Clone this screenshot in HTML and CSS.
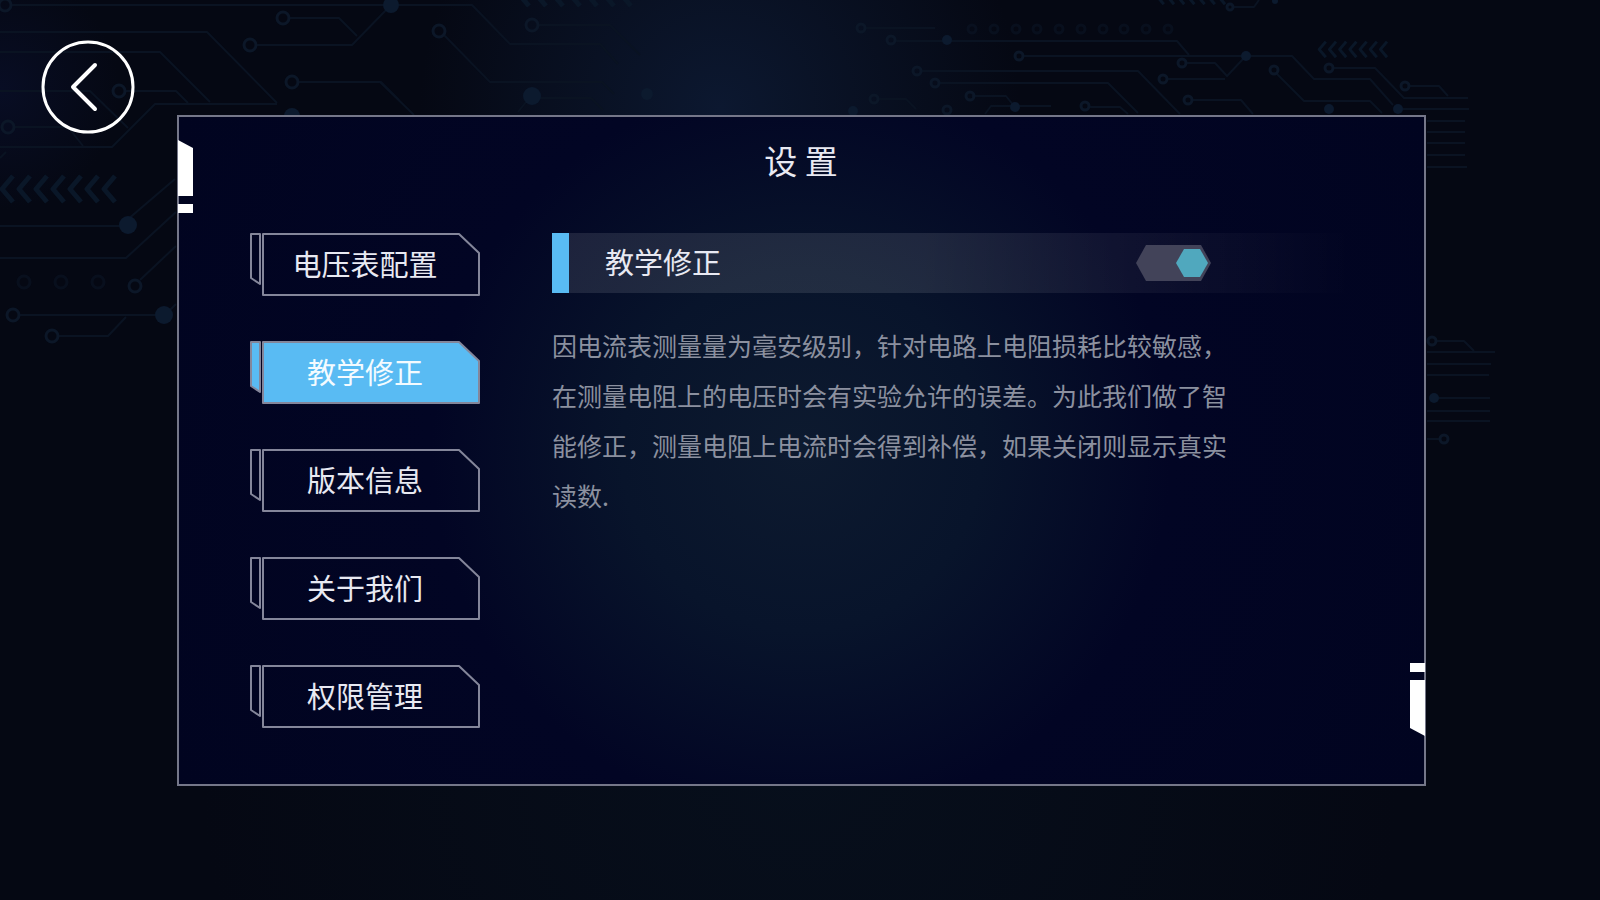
FILE: index.html
```html
<!DOCTYPE html>
<html lang="zh-CN">
  <head>
    <meta charset="utf-8">
    <title>设置</title>
    <link rel="stylesheet" href="styles.css">
  </head>
  <body>

    <!-- circuit board backdrop -->
    <svg class="circuit" viewBox="0 0 1600 900" preserveAspectRatio="xMidYMid slice" aria-hidden="true">
      <defs>
        <g id="arrows">
          <path d="M13 1L2 14l11 13M30 1L19 14l11 13M47 1L36 14l11 13M64 1L53 14l11 13M81 1L70 14l11 13M98 1L87 14l11 13M115 1l-11 13l11 13"/>
        </g>
      </defs>
      <g class="traces">
        <path d="M11 5H385M289 18h50l18 18M256 45h96L390 6M0 32h207l70 71M0 52h160l50 50M299 82h82l18 18M125 91h51l12 12M0 91h90l38 37M14 127h54l15 19M0 147h112l43-43h122M0 158l6-6"/>
        <path d="M0 226h120l55-47M0 258h126l50-46M140 280l36-34M19 315h142M58 336h50l18-19M165 315l11-11"/>
        <path d="M390 5h82l38 39h90l18 20M444 35l46 47h112l12 12M539 25h71l30 30M540 98h51l12 12M518 112l8-10M380 82l34 33"/>
        <path d="M865 28h70M895 41h282l12 14M1023 56h269l22 23h56l23 26M922 71h216l42 43M938 83h170l30 30M972 96h34l8 10M1090 107h30l8 7M1187 63h28l12 13l17-18M1166 79h59M1191 100h50l12 14M1276 73l28 28h66l12 12M1334 68h41l29 30h64M1409 86h30l9 10M878 99h28l10 10M985 114l6-8h60M1232 7h22l5-7"/>
        <path d="M1398 109h71M1427 121h38M1427 132h38M1427 143h38M1427 155h38M1427 167h40M1435 341h29l10 10M1427 352h68M1427 364h64M1427 375h62M1436 398h54M1427 411h63M1427 421h63M1427 439h14"/>
      </g>
      <g class="rings">
        <circle cx="5" cy="5" r="6"/><circle cx="283" cy="18" r="6"/><circle cx="250" cy="45" r="6"/>
        <circle cx="292" cy="82" r="6"/><circle cx="119" cy="91" r="6"/><circle cx="8" cy="127" r="6"/>
        <circle cx="135" cy="286" r="6"/><circle cx="13" cy="315" r="6"/><circle cx="52" cy="336" r="6"/>
        <circle cx="439" cy="31" r="6"/><circle cx="532" cy="25" r="6"/>
        <circle cx="861" cy="28" r="4"/><circle cx="891" cy="40" r="4"/><circle cx="1019" cy="56" r="4"/>
        <circle cx="917" cy="71" r="4"/><circle cx="935" cy="83" r="4"/><circle cx="970" cy="96" r="4"/>
        <circle cx="874" cy="99" r="4"/><circle cx="947" cy="110" r="4"/><circle cx="1085" cy="106" r="4"/>
        <circle cx="1182" cy="63" r="4"/><circle cx="1163" cy="79" r="4"/><circle cx="1188" cy="100" r="4"/>
        <circle cx="1274" cy="70" r="4"/><circle cx="1329" cy="68" r="4"/><circle cx="1405" cy="86" r="4"/>
        <circle cx="1432" cy="341" r="4"/><circle cx="1444" cy="439" r="4"/><circle cx="1230" cy="7" r="3"/>
      </g>
      <g class="rings faint">
        <circle cx="24" cy="282" r="6"/><circle cx="61" cy="282" r="6"/><circle cx="98" cy="282" r="6"/>
        <circle cx="972" cy="29" r="4"/><circle cx="994" cy="29" r="4"/><circle cx="1016" cy="29" r="4"/>
        <circle cx="1037" cy="29" r="4"/><circle cx="1059" cy="29" r="4"/><circle cx="1081" cy="29" r="4"/>
        <circle cx="1103" cy="29" r="4"/><circle cx="1124" cy="29" r="4"/><circle cx="1146" cy="29" r="4"/>
        <circle cx="1168" cy="29" r="4"/>
      </g>
      <g class="dots">
        <circle cx="391" cy="5" r="8"/><circle cx="128" cy="225" r="9"/><circle cx="164" cy="315" r="9"/>
        <circle cx="292" cy="116" r="8"/><circle cx="532" cy="96" r="9"/><circle cx="647" cy="94" r="6"/>
        <circle cx="947" cy="40" r="5"/><circle cx="1246" cy="56" r="5"/><circle cx="1015" cy="107" r="5"/>
        <circle cx="853" cy="111" r="5"/><circle cx="1329" cy="109" r="5"/><circle cx="1398" cy="109" r="5"/>
        <circle cx="1434" cy="398" r="5"/><circle cx="1275" cy="1" r="3"/>
      </g>
      <g class="chevrons">
        <use href="#arrows" y="175"/>
        <use href="#arrows" transform="translate(516 -21)"/>
        <use href="#arrows" transform="translate(1318 41) scale(.6)"/>
        <use href="#arrows" transform="translate(1156 -12) scale(.6)"/>
      </g>
    </svg>

    <div class="page">
      <button class="back" type="button" aria-label="返回">
        <svg viewBox="0 0 94 94">
          <circle cx="47" cy="47" r="45"/>
          <path d="M54 25L32 47l22 22"/>
        </svg>
      </button>

      <main class="panel">
        <svg class="corner corner-top" viewBox="0 0 16 74" aria-hidden="true">
          <path d="M0 0l15 8v48H0zM0 64h15v9H0z"/>
        </svg>
        <svg class="corner corner-bottom" viewBox="0 0 16 74" aria-hidden="true">
          <path d="M0 0l15 8v48H0zM0 64h15v9H0z"/>
        </svg>

        <h1>设 置</h1>

        <div class="columns">
          <nav class="menu">
            <button type="button" class="menu-item">
              <svg viewBox="0 0 230 63"><path d="M1 1h9v50l-9-6zM13 1h196l20 19v42H13z"/></svg>
              <span>电压表配置</span>
            </button>
            <button type="button" class="menu-item active" aria-current="page">
              <svg viewBox="0 0 230 63"><path d="M1 1h9v50l-9-6zM13 1h196l20 19v42H13z"/></svg>
              <span>教学修正</span>
            </button>
            <button type="button" class="menu-item">
              <svg viewBox="0 0 230 63"><path d="M1 1h9v50l-9-6zM13 1h196l20 19v42H13z"/></svg>
              <span>版本信息</span>
            </button>
            <button type="button" class="menu-item">
              <svg viewBox="0 0 230 63"><path d="M1 1h9v50l-9-6zM13 1h196l20 19v42H13z"/></svg>
              <span>关于我们</span>
            </button>
            <button type="button" class="menu-item">
              <svg viewBox="0 0 230 63"><path d="M1 1h9v50l-9-6zM13 1h196l20 19v42H13z"/></svg>
              <span>权限管理</span>
            </button>
          </nav>

          <section class="content">
            <div class="option">
              <label for="correction">教学修正</label>
              <input type="checkbox" id="correction" class="switch" role="switch" checked>
            </div>
            <p class="description">因电流表测量量为毫安级别，针对电路上电阻损耗比较敏感，在测量电阻上的电压时会有实验允许的误差。为此我们做了智能修正，测量电阻上电流时会得到补偿，如果关闭则显示真实读数.</p>
          </section>
        </div>
      </main>
    </div>

  </body>
</html>
```
FILE: styles.css
```css
* {
  box-sizing: border-box;
}

body {
  margin: 0;
  min-height: 100vh;
  font-family: "Noto Sans CJK SC", sans-serif;
  color: #e8e9f2;
  background:
    radial-gradient(circle at 45% 12%, #0c1830 0, rgba(12, 24, 48, 0) 300px),
    radial-gradient(circle at 0 10%, #080d24 0, rgba(8, 13, 36, 0) 120px),
    radial-gradient(ellipse at 50% 85%, #070f1c 0, rgba(7, 15, 28, 0) 600px),
    #050813;
}

button {
  padding: 0;
  border: 0;
  background: none;
  font: inherit;
  color: inherit;
  cursor: pointer;
}

.circuit {
  position: absolute;
  top: 0;
  left: 0;
  width: 100%;
  height: 100%;
  fill: none;
  stroke-linejoin: round;
}

.traces {
  stroke: #0a1322;
  stroke-width: 2;
}

.rings {
  stroke: #0c1728;
  stroke-width: 3;
}

.faint {
  opacity: .5;
}

.dots {
  fill: #0c1a2e;
}

.chevrons {
  stroke: #0a1728;
  stroke-width: 5;
}

.page {
  position: relative;
  display: grid;
  grid-template-columns: 177px 1fr 174px;
  align-items: start;
}

.back {
  width: 94px;
  height: 94px;
  margin: 40px 0 0 41px;
}

.back svg {
  display: block;
  fill: none;
  stroke: #fff;
  stroke-width: 3;
  stroke-linecap: round;
  stroke-linejoin: round;
}

.back path {
  stroke-width: 4;
}

.panel {
  position: relative;
  margin-top: 115px;
  padding: 21px 72px 56px 71px;
  border: 2px solid #757789;
  background: radial-gradient(circle at 50% 50%, #0d1a2f 0, #08142b 180px, #020524 370px, #010420 100%);
}

.corner {
  position: absolute;
  width: 16px;
  height: 74px;
  fill: #fff;
}

.corner-top {
  top: 23px;
  left: -1px;
}

.corner-bottom {
  right: -1px;
  bottom: 48px;
  transform: rotate(180deg);
}

h1 {
  margin: 0 0 51px;
  font-size: 33px;
  font-weight: 400;
  line-height: 44px;
  text-align: center;
}

.columns {
  display: grid;
  grid-template-columns: 230px 1fr;
  gap: 72px;
}

.menu {
  display: grid;
  gap: 45px;
}

.menu-item {
  display: grid;
  place-items: center;
  height: 63px;
  font-size: 29px;
  line-height: 40px;
}

.menu-item > * {
  grid-area: 1 / 1;
}

.menu-item svg {
  width: 230px;
  height: 63px;
  fill: none;
  stroke: #84869a;
  stroke-width: 2;
  stroke-linejoin: round;
}

.menu-item span,
.option label {
  padding-bottom: 4px;
}

.menu-item.active {
  color: #f4fbff;
}

.menu-item.active svg {
  fill: #59bbf3;
}

.option {
  display: flex;
  align-items: center;
  justify-content: space-between;
  height: 60px;
  padding: 0 141px 0 36px;
  border-left: 17px solid #59bbf3;
  background: linear-gradient(to right, rgba(255, 255, 255, .1) 45%, rgba(255, 255, 255, 0));
}

.option label {
  font-size: 29px;
  line-height: 40px;
}

.switch {
  appearance: none;
  display: flex;
  align-items: center;
  justify-content: flex-start;
  width: 75px;
  height: 36px;
  margin: 0;
  padding: 0 3px;
  background: #424359;
  clip-path: polygon(10px 0, 65px 0, 100% 50%, 65px 100%, 10px 100%, 0 50%);
  cursor: pointer;
}

.switch:checked {
  justify-content: flex-end;
}

.switch::before {
  content: "";
  width: 32px;
  height: 28px;
  background: #777a8d;
  clip-path: polygon(8px 0, 24px 0, 100% 50%, 24px 100%, 8px 100%, 0 50%);
}

.switch:checked::before {
  background: #50a8be;
}

.description {
  max-width: 680px;
  margin: 27px 0 0;
  font-size: 25px;
  line-height: 50px;
  color: #8b909f;
}
```
